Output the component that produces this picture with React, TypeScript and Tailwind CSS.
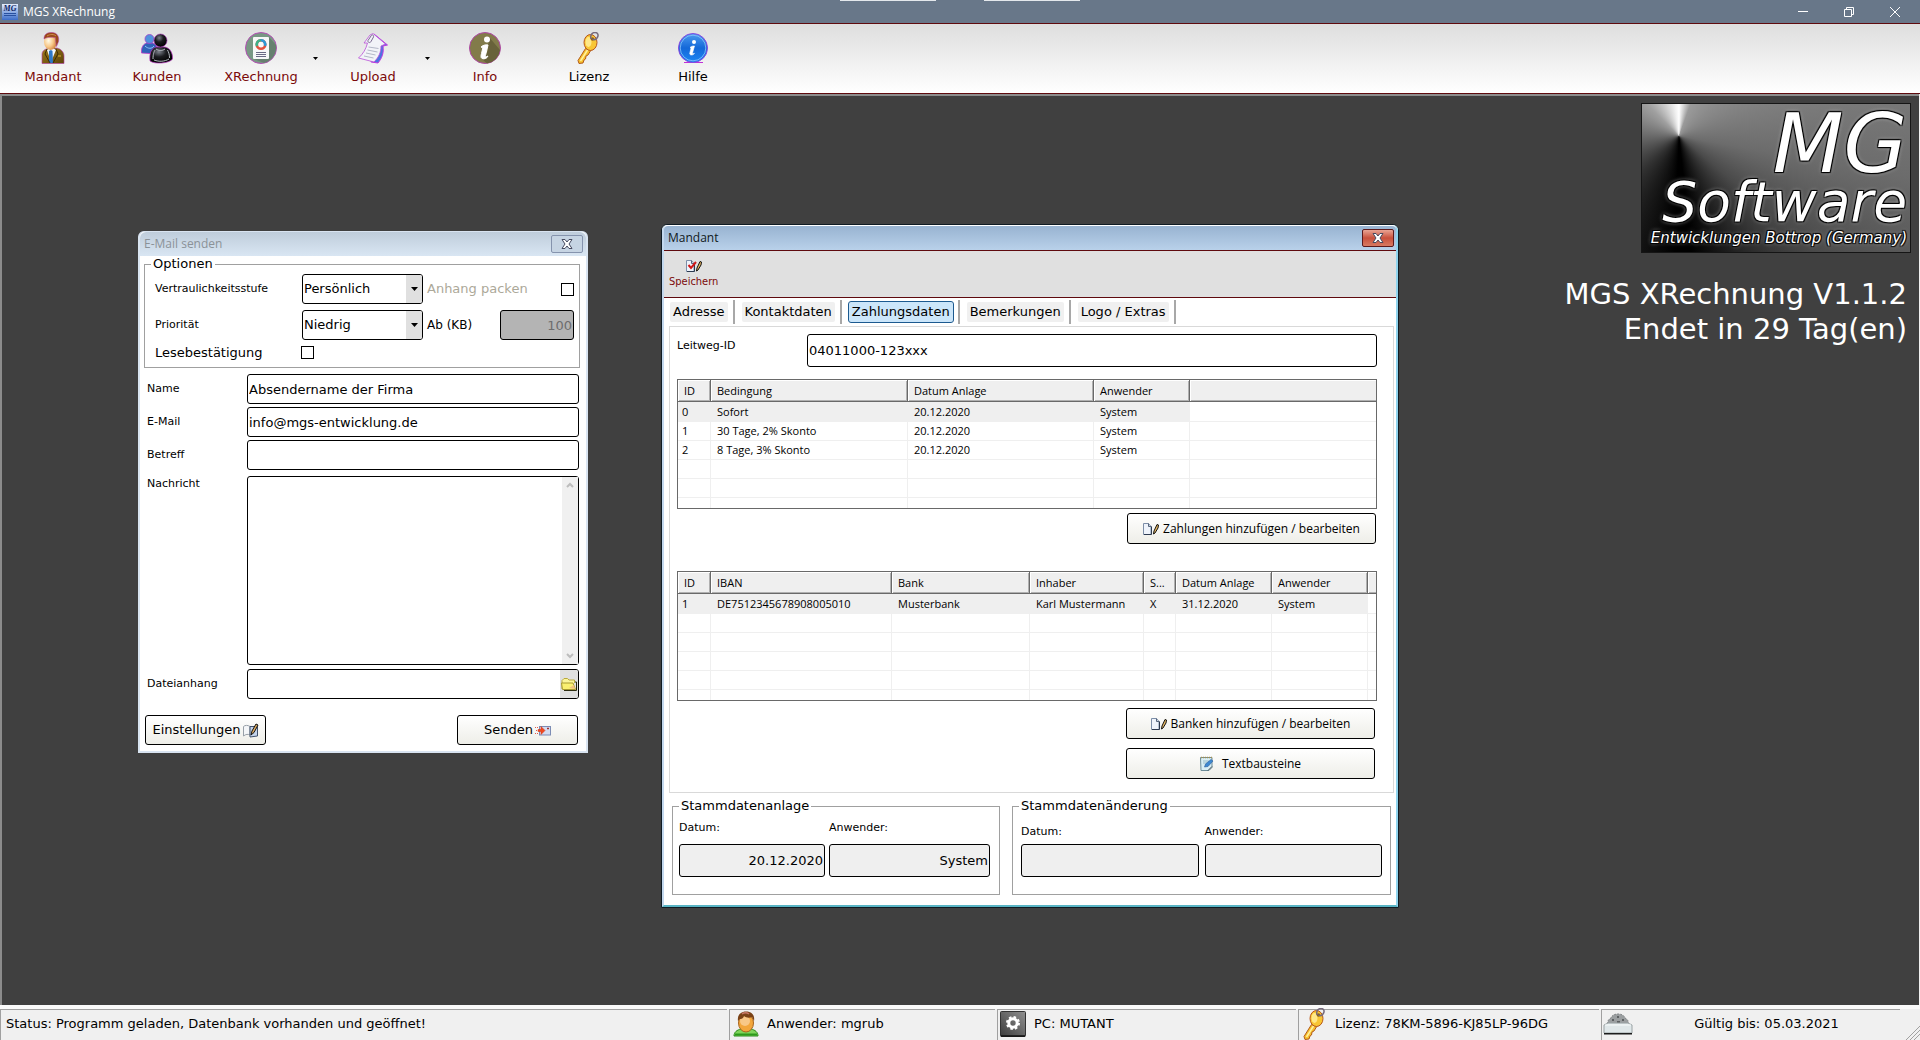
import type { ReactNode } from 'react';

type Column = { label: string; width: string };

const paymentColumns: Column[] = [
  { label: 'ID', width: 'w-[33px]' },
  { label: 'Bedingung', width: 'w-[197px]' },
  { label: 'Datum Anlage', width: 'w-[186px]' },
  { label: 'Anwender', width: 'w-24' },
];

const payments = [
  ['0', 'Sofort', '20.12.2020', 'System'],
  ['1', '30 Tage, 2% Skonto', '20.12.2020', 'System'],
  ['2', '8 Tage, 3% Skonto', '20.12.2020', 'System'],
];

const bankColumns: Column[] = [
  { label: 'ID', width: 'w-[33px]' },
  { label: 'IBAN', width: 'w-[181px]' },
  { label: 'Bank', width: 'w-[138px]' },
  { label: 'Inhaber', width: 'w-[114px]' },
  { label: 'S...', width: 'w-8' },
  { label: 'Datum Anlage', width: 'w-24' },
  { label: 'Anwender', width: 'w-24' },
];

const banks = [['1', 'DE7512345678908005010', 'Musterbank', 'Karl Mustermann', 'X', '31.12.2020', 'System']];

const tabs = ['Adresse', 'Kontaktdaten', 'Zahlungsdaten', 'Bemerkungen', 'Logo / Extras'];

const FIELD = 'rounded-[3px] border border-black bg-white px-px text-[13px] text-black outline-none';
const BUTTON =
  'flex items-center justify-center rounded-[3px] border border-black bg-gradient-to-b from-white to-[#eeeee8] text-black';
const UI_FONT = "font-['Open_Sans','Noto_Sans',sans-serif]";

/* ---------- icons ---------- */

function ManIcon() {
  return (
    <svg viewBox="0 0 32 32" className="h-8 w-8">
      <defs>
        <radialGradient id="manFace" cx="0.35" cy="0.45" r="0.7">
          <stop offset="0" stopColor="#fffbe8" />
          <stop offset="0.5" stopColor="#f8c98a" />
          <stop offset="1" stopColor="#c8742c" />
        </radialGradient>
        <linearGradient id="manCoat" x1="0" y1="0" x2="1" y2="1">
          <stop offset="0" stopColor="#a07a1c" />
          <stop offset="1" stopColor="#5c4308" />
        </linearGradient>
      </defs>
      <path d="M5 31.500V22c0-3 3-5 7-6h8c4 1 7 4 7 8v7.500z" fill="url(#manCoat)" stroke="#b23aa8" strokeWidth="0.6" />
      <path d="M10 18l4 12 5-12-3-2h-4z" fill="#f2f6fb" />
      <path d="M12 19l2-1 1.500 1 .5 12h-4z" fill="#2e78c8" />
      <path d="M10 17l-2 5 5 9M19 17l2 5-5 9" stroke="#3c2c04" fill="none" />
      <path d="M21 24h3" stroke="#d8b030" />
      <ellipse cx="13.500" cy="9.500" rx="6.500" ry="8.500" fill="url(#manFace)" />
      <path d="M7 7C7 2 10 .5 15 .5c5 0 7.500 4 6.500 9l-2 5c-.5-3-1-6-1-9-4 0-7-1-11.500 1.500z" fill="#9a4a18" stroke="#b23aa8" strokeWidth="0.5" />
      <path d="M10 4c3-2 7-2 9 0" stroke="#d08a50" fill="none" />
    </svg>
  );
}

function CustomersIcon() {
  return (
    <svg viewBox="0 0 32 32" className="h-8 w-8">
      <defs>
        <radialGradient id="custHead" cx="0.4" cy="0.3" r="0.7">
          <stop offset="0" stopColor="#7d828c" />
          <stop offset="0.45" stopColor="#1b1c20" />
          <stop offset="1" stopColor="#000" />
        </radialGradient>
      </defs>
      <path d="M.5 21c-.5-6 2-9 5-10h6c4 1 5 4 5 11z" fill="#2f62b8" stroke="#c03ac8" strokeWidth="0.8" />
      <circle cx="8.500" cy="7" r="4.500" fill="#4f92dc" stroke="#a040c8" strokeWidth="0.8" />
      <path d="M4 14c3 3 7 3 9 0" stroke="#8cc0f4" fill="none" />
      <path d="M9 29c-1-9 2-13 6-14h9c5 1 8 6 7.500 12-3 4.500-18 5.500-22.500 2z" fill="url(#custHead)" stroke="#c03ac8" strokeWidth="0.7" />
      <circle cx="19.500" cy="8.500" r="6.500" fill="url(#custHead)" stroke="#a030b0" strokeWidth="0.6" />
      <path d="M12 27c0-5 1-7 2-9M28.500 26c0-4-1-6-2-8M13 28c5 2 11 1.500 15-1M15 17c3 2 6 2 9 0" stroke="#b8bcc4" fill="none" />
    </svg>
  );
}

function ReportIcon() {
  return (
    <svg viewBox="0 0 32 32" className="h-8 w-8">
      <circle cx="16" cy="16" r="15.500" fill="#789884" stroke="#b54fb5" />
      <path d="M24 5l7 8a16 16 0 0 1-12 18L9 27z" fill="#66806f" />
      <rect x="8" y="5" width="16" height="22" rx="1" fill="#f7f8f8" />
      <circle cx="16" cy="12.500" r="4.200" fill="none" stroke="#e2503c" strokeWidth="2.600" />
      <path d="M16 8.300a4.200 4.200 0 0 1 4 5.500" fill="none" stroke="#2a9ad8" strokeWidth="2.600" />
      <path d="M12 14a4.200 4.200 0 0 1 4-5.700" fill="none" stroke="#3db28a" strokeWidth="2.600" />
      <path d="M11 20.500h10M11 22.500h10M11 24.500h10" stroke="#6a6a84" />
    </svg>
  );
}

function UploadIcon() {
  return (
    <svg viewBox="0 0 32 32" className="h-8 w-8">
      <path d="M17 2l13.500 11-4.500 1c1 7-1 12-5 17l-7-1z" fill="#4b74e0" stroke="#c03ae0" />
      <path d="M7 11l6-8 3-1.500L28.500 12 24 14c0 6-2 11-7 16L1.500 26C6 22 9 17 10.500 11z" fill="#f2f3f8" stroke="#b94fd8" strokeWidth="0.800" />
      <path d="M11.500 15l10 1.500M10.500 18l10 2M9 21l9.500 2M7 24l9.500 2" stroke="#b4b8c8" />
      <path d="M14 4l-3 4.500c-.5 2 2 3 3 1L16.500 5c.5-2-1.500-3-2.500-1z" fill="none" stroke="#7a6a90" />
    </svg>
  );
}

function InfoIcon() {
  return (
    <svg viewBox="0 0 32 32" className="h-8 w-8">
      <circle cx="16" cy="16" r="15.500" fill="#827b4a" stroke="#b048a8" />
      <path d="M20 5l11 13a15.500 15.500 0 0 1-13 13.500L13 27l6-8z" fill="#68623a" />
      <circle cx="18" cy="7.500" r="3" fill="#fff" />
      <path d="M12 15c2-2 5-2.500 7-2l-2.500 10.500c-.3 1.500.5 1.500 2.500.5-1 2.500-4 3.500-6 2.500-1.500-.8-1-3-.5-5l1.300-5.500z" fill="#fff" stroke="#fff" />
    </svg>
  );
}

function KeyIcon() {
  return (
    <svg viewBox="0 0 32 32" className="h-8 w-8">
      <path d="M12.500 16.500L5 28.500l1 3 4-.5 1-3 1.500-1 .5-3 2-1 3-5z" fill="#f6c02c" stroke="#b35a18" />
      <path d="M14.500 18L7.500 29" stroke="#fff0a0" strokeWidth="1.500" />
      <ellipse cx="17.500" cy="10.500" rx="6.500" ry="8" fill="#f8c634" stroke="#b8581c" />
      <ellipse cx="15.500" cy="10" rx="3" ry="5" fill="#ffe888" />
      <circle cx="19.500" cy="7" r="1.800" fill="#8a6020" />
      <path d="M18 7c-1-4 1-6.500 4-6.500s4 3 2 5.500c-1 1.500-3 2-4.500 1" fill="none" stroke="#766a7c" strokeWidth="1.500" />
    </svg>
  );
}

function HelpIcon() {
  return (
    <svg viewBox="0 0 32 32" className="h-8 w-8">
      <defs>
        <linearGradient id="helpBlue" x1="0" y1="0" x2="0" y2="1">
          <stop offset="0" stopColor="#4d9cf0" />
          <stop offset="0.5" stopColor="#1468d8" />
          <stop offset="1" stopColor="#1c86f4" />
        </linearGradient>
      </defs>
      <path d="M7 30.500h19" stroke="#c030d8" />
      <circle cx="16" cy="16" r="14.500" fill="url(#helpBlue)" stroke="#8848e0" />
      <circle cx="16" cy="16" r="12.800" fill="none" stroke="#8cc4fa" strokeWidth="0.800" />
      <circle cx="17" cy="10" r="2" fill="#fff" />
      <path d="M13 15.500c1.500-1.500 3-1.500 4.500-1.500L15.500 21c-.3 1 .5 1 2 .3-1 1.500-2.500 2-4 1.500-1-.5-.8-1.500-.5-2.500l1-4z" fill="#fff" stroke="#fff" strokeWidth="0.600" />
    </svg>
  );
}

function UserIcon() {
  return (
    <svg viewBox="0 0 26 26" className="h-[26px] w-[26px]">
      <path d="M1 25c0-4 3-6 7-7h10c4 1 7 3 7 7z" fill="#7ed45a" stroke="#2c8a1c" />
      <path d="M2 23.500h22" stroke="#2c9a1c" strokeWidth="2" />
      <ellipse cx="13" cy="12" rx="7.500" ry="9" fill="#f2a63c" stroke="#a8641c" />
      <ellipse cx="12" cy="10" rx="5" ry="5" fill="#f8c888" />
      <path d="M5 10c-1-6 3-9.500 8-9.500 6 0 9 4 8 9.500l-2-4c-2 1-6 1-8-1-1 3-3 3-4 3z" fill="#7a4216" />
      <path d="M9 3c2-1.500 5-1.500 7 0" stroke="#c87868" strokeWidth="1.500" fill="none" />
    </svg>
  );
}

function ComputerIcon() {
  return (
    <svg viewBox="0 0 26 26" className="h-[26px] w-[26px]">
      <defs>
        <linearGradient id="pcGrey" x1="1" y1="0" x2="0" y2="1">
          <stop offset="0" stopColor="#909090" />
          <stop offset="1" stopColor="#3c3c3c" />
        </linearGradient>
      </defs>
      <rect x="0.500" y="0.500" width="25" height="25" rx="1" fill="url(#pcGrey)" stroke="#333" />
      <circle cx="13" cy="12" r="5.500" fill="none" stroke="#fff" strokeWidth="3" strokeDasharray="2.300 2" />
      <circle cx="13" cy="12" r="4.200" fill="none" stroke="#fff" strokeWidth="3" />
      <path d="M1 25h24" stroke="#111" strokeWidth="1.500" />
    </svg>
  );
}

function DriveIcon() {
  return (
    <svg viewBox="0 0 30 22" className="h-[22px] w-[30px]">
      <path d="M5 11C4 8 6 6 8 5c1-3 4-4 7-4s6 1 7 4c2 1 4 3 3 6z" fill="#9a9ea0" stroke="#808486" strokeDasharray="2 1" />
      <path d="M9 6h2v2H9zM14 3h2v2h-2zM19 6h2v2h-2zM14 8h3v2h-3z" fill="#5c6062" />
      <path d="M1 12l4-2h20l4 2v8H1z" fill="#dfe7e9" stroke="#9aa2a4" />
      <path d="M2 12h26" stroke="#f8fcfc" />
      <path d="M1 20h28v1.500H1z" fill="#1c1c1c" />
    </svg>
  );
}

function PageIcon({ check }: { check?: boolean }) {
  return (
    <svg viewBox="0 0 16 12" className="h-3 w-4 shrink-0">
      <path d="M.5.500h5l2.500 3v8H.5z" fill="#eef3fb" stroke="#7d8ea8" />
      <path d="M5.500.500v3H8" fill="none" stroke="#56657c" />
      <path d="M1 11.500h7.500v-8" fill="none" stroke="#2c3a50" />
      {check && <path d="M2.500 5l2.500 3 5-6" fill="none" stroke="#d01818" strokeWidth="2" />}
      <path d="M10.500 11l.5-3 3-6.500 1.500.5-.5 3-3 5z" fill="#e8b860" stroke="#111" />
    </svg>
  );
}

function NotebookIcon() {
  return (
    <svg viewBox="0 0 16 15" className="h-[15px] w-4">
      <path d="M.5 13V3.500C2 2 5 2 7 3.500V12C5 11 3 11 .5 13z" fill="#f4f6f8" stroke="#98a0a8" />
      <path d="M7 3.500h7.500v9.500L7 14z" fill="#c4d4ec" stroke="#40506a" />
      <path d="M8 12l1-4 4-7 2 1-4 7.500z" fill="#d8a860" stroke="#111" />
    </svg>
  );
}

function SendIcon() {
  return (
    <svg viewBox="0 0 16 11" className="h-[11px] w-4">
      <rect x="4.500" y="1.500" width="11" height="8.500" fill="#d4dcf0" stroke="#7c8cb4" />
      <path d="M12 3.500h2" stroke="#a03030" strokeWidth="1.500" />
      <path d="M0 2.500h3M0 8.500h3M1 5.500h3" stroke="#e05a4a" strokeDasharray="1 1" />
      <path d="M3 4.500h3V1.500l4 4-4 4V6.500H3z" fill="#f04a20" stroke="#d03010" strokeWidth="0.500" />
    </svg>
  );
}

function FolderIcon() {
  return (
    <svg viewBox="0 0 16 13" className="h-[13px] w-4">
      <path d="M14 4h1.500v8.500H3" fill="none" stroke="#2c2c10" />
      <path d="M1 11V2.500L3 .500h3.500L8 2h5.500v3" fill="#fbf59a" stroke="#b8a83c" />
      <path d="M1.500 11.500L.5 5H12l2.500 6.500z" fill="#faf070" stroke="#a89a30" />
      <path d="M8 10l5-3 1 4z" fill="#f2c080" />
    </svg>
  );
}

function NoteIcon() {
  return (
    <svg viewBox="0 0 14 15" className="h-[15px] w-[14px]">
      <path d="M.5 1.500h11.500v10l-3 3H1z" fill="#d8eef4" stroke="#6c8c98" />
      <path d="M1 1.500h11" stroke="#a8904c" strokeWidth="1.500" strokeDasharray="1 1" />
      <path d="M3 5h6M3 7h4" stroke="#98bcc8" />
      <path d="M4.500 11l1-3L11 3.500l2 1.500-5 5.500z" fill="#3c88d0" stroke="#2a5c9c" strokeWidth="0.600" />
      <path d="M8 14.500l4-4" stroke="#404c50" />
    </svg>
  );
}

function CloseGlyph() {
  return (
    <svg viewBox="0 0 12 10" className="h-2.5 w-3">
      <path d="M1 .500h3L6 3 8 .500h3L8 5l3 4.500H8L6 7 4 9.500H1L4 5z" fill="#fff" stroke="#474b60" />
    </svg>
  );
}

function DownArrow() {
  return (
    <svg viewBox="0 0 7 4" className="h-1 w-[7px]">
      <path d="M0 0h7L3.500 4z" fill="#000" />
    </svg>
  );
}

/* ---------- shared parts ---------- */

function ToolButton({ icon, label, dark, menu }: { icon: ReactNode; label: string; dark?: boolean; menu?: boolean }) {
  return (
    <div className="flex">
      <button className={`flex w-[104px] flex-col items-center gap-1 pt-2 text-[13px] leading-[18px] ${dark ? 'text-black' : 'text-[#7b0a0a]'}`}>
        {icon}
        {label}
      </button>
      {menu && (
        <button aria-label={`${label} Menü`} className="flex w-2 items-center">
          <svg viewBox="0 0 5 3" className="h-[3px] w-[5px]">
            <path d="M0 0h5L2.500 3z" fill="#000" />
          </svg>
        </button>
      )}
    </div>
  );
}

function Combo({ id, value }: { id: string; value: string }) {
  return (
    <div className="relative">
      <select id={id} defaultValue={value} className={`${FIELD} h-[30px] w-[121px] appearance-none`}>
        <option>{value}</option>
      </select>
      <span className="pointer-events-none absolute inset-y-px right-px flex w-4 items-center justify-center rounded-r-[2px] bg-[#e0e0e0]">
        <DownArrow />
      </span>
    </div>
  );
}

function CheckBox({ id }: { id: string }) {
  return <input id={id} type="checkbox" className="h-[13px] w-[13px] appearance-none border border-black bg-white" />;
}

function DataTable({ columns, rows }: { columns: Column[]; rows: string[][] }) {
  const blank = Array.from({ length: 6 - rows.length }, () => columns.map(() => ''));
  return (
    <div className="h-[130px] overflow-hidden border border-[#696969] bg-white">
      <table className={`w-full table-fixed border-separate border-spacing-0 text-left text-[11px] leading-[18px] text-black ${UI_FONT}`}>
        <thead>
          <tr className="h-[22px]">
            {columns.map((c) => (
              <th
                key={c.label}
                className={`${c.width} overflow-hidden border-r border-b border-[#696969] bg-[#efefef] py-0 pr-0 pl-1.5 font-normal whitespace-nowrap shadow-[inset_1px_1px_0_#fff,inset_-1px_-1px_0_#b0b0b0]`}
              >
                {c.label}
              </th>
            ))}
            <th className="border-b border-[#696969] bg-[#efefef] p-0 shadow-[inset_1px_1px_0_#fff,inset_0_-1px_0_#b0b0b0]" />
          </tr>
        </thead>
        <tbody>
          {[...rows, ...blank].map((row, i) => (
            <tr key={i} className={i === 0 ? 'h-5' : 'h-[19px]'}>
              {row.map((cell, j) => (
                <td
                  key={j}
                  className={`border-r border-b border-[#efefef] py-0 pr-0 whitespace-nowrap ${j === 0 ? 'pl-1' : 'pl-1.5'} ${i === 0 ? 'bg-[#efefef]' : ''}`}
                >
                  {cell}
                </td>
              ))}
              <td className="border-b border-[#efefef] p-0" />
            </tr>
          ))}
        </tbody>
      </table>
    </div>
  );
}

function StatusCell({ icon, width, children }: { icon?: ReactNode; width: string; children: ReactNode }) {
  return (
    <div className={`flex items-center border-t border-l border-[#a0a0a0] pb-0.5 ${width}`}>
      {icon}
      {children}
    </div>
  );
}

/* ---------- windows ---------- */

function MailWindow() {
  return (
    <section className="absolute top-[135px] left-[138px] w-[450px] rounded-t-md border-2 border-t border-[#d9e4f1] bg-white">
      <header className="flex h-6 items-center justify-between rounded-t-md bg-gradient-to-b from-[#bfcddb] to-[#d9e6f3] pr-[3px] pl-1">
        <h2 className="font-['Open_Sans',sans-serif] text-xs text-[#8b9298]">E-Mail senden</h2>
        <button aria-label="Schließen" className="flex h-[18px] w-8 items-center justify-center rounded-[2px] border border-[#8593ad] bg-[#c6d4e3]">
          <CloseGlyph />
        </button>
      </header>

      <fieldset className="mr-1.5 ml-1 border border-[#a0a0a0] pr-[5px] pb-2 pl-2.5">
        <legend className="-ml-1 px-0.5 text-[13px] leading-4">Optionen</legend>
        <div className="flex flex-col gap-1.5 pt-0.5 text-[11px]">
          <div className="flex items-center">
            <label htmlFor="stufe" className="w-[147px]">Vertraulichkeitsstufe</label>
            <Combo id="stufe" value="Persönlich" />
            <label htmlFor="packen" className="ml-1 flex-1 text-[13px] text-[#aca899]">Anhang packen</label>
            <CheckBox id="packen" />
          </div>
          <div className="flex items-center">
            <label htmlFor="prio" className="w-[147px]">Priorität</label>
            <Combo id="prio" value="Niedrig" />
            <label htmlFor="kb" className="ml-1 flex-1 text-xs">Ab (KB)</label>
            <input id="kb" disabled defaultValue="100" className="h-[30px] w-[74px] rounded-[3px] border border-black bg-[#b4b4b4] px-px text-right text-[13px] text-[#6d6d6d]" />
          </div>
          <div className="flex h-[13px] items-center">
            <label htmlFor="lesen" className="w-[146px] text-[13px]">Lesebestätigung</label>
            <CheckBox id="lesen" />
          </div>
        </div>
      </fieldset>

      <div className="mt-1.5 flex flex-col gap-[3px] px-[7px] text-[11px]">
        <div className="flex items-center">
          <label htmlFor="name" className="w-[100px]">Name</label>
          <input id="name" defaultValue="Absendername der Firma" className={`${FIELD} h-[30px] min-w-0 flex-1`} />
        </div>
        <div className="flex items-center">
          <label htmlFor="mail" className="w-[100px]">E-Mail</label>
          <input id="mail" defaultValue="info@mgs-entwicklung.de" className={`${FIELD} h-[30px] min-w-0 flex-1`} />
        </div>
        <div className="flex items-center">
          <label htmlFor="betreff" className="w-[100px]">Betreff</label>
          <input id="betreff" className={`${FIELD} h-[30px] min-w-0 flex-1`} />
        </div>
        <div className="flex pt-[3px] pb-px">
          <label htmlFor="nachricht" className="w-[100px]">Nachricht</label>
          <div className="relative flex flex-1">
            <textarea id="nachricht" className={`${FIELD} h-[189px] flex-1 resize-none`} />
            <div className="absolute inset-y-px right-px flex w-4 flex-col items-center justify-between bg-[#f0f0f0] py-1">
              <svg viewBox="0 0 8 6" className="h-2 w-2">
                <path d="M1 5l3-3 3 3" fill="none" stroke="#bdbdbd" strokeWidth="2" />
              </svg>
              <svg viewBox="0 0 8 6" className="h-2 w-2">
                <path d="M1 1l3 3 3-3" fill="none" stroke="#bdbdbd" strokeWidth="2" />
              </svg>
            </div>
          </div>
        </div>
        <div className="flex items-center">
          <label htmlFor="datei" className="w-[100px]">Dateianhang</label>
          <div className="relative flex flex-1">
            <input id="datei" className={`${FIELD} h-[30px] flex-1`} />
            <button aria-label="Datei wählen" className="absolute inset-y-px right-px flex w-[18px] items-center justify-center rounded-r-[2px] bg-[#e0e0e0]">
              <FolderIcon />
            </button>
          </div>
        </div>
      </div>

      <footer className="mt-4 flex justify-between pr-2 pb-1.5 pl-[5px] text-[13px]">
        <button className={`${BUTTON} h-[30px] w-[121px] gap-0.5`}>
          Einstellungen <NotebookIcon />
        </button>
        <button className={`${BUTTON} h-[30px] w-[121px] gap-0.5`}>
          Senden <SendIcon />
        </button>
      </footer>
    </section>
  );
}

function MandantWindow() {
  return (
    <section className="absolute top-32 left-[661px] w-[738px] rounded-t-md border border-[#101c24] bg-white">
      <div className="rounded-t-md border-x-2 border-b-2 border-[#8fd4ee] border-l-[#c3d8ee] border-b-[#58b4c4]">
        <header className="flex h-[25px] items-center justify-between rounded-t-[4px] border-t border-white bg-gradient-to-b from-[#98b3d1] to-[#b9d1ea] pr-0.5 pl-1">
          <h2 className="font-['Open_Sans',sans-serif] text-xs text-[#101820]">Mandant</h2>
          <button aria-label="Schließen" className="flex h-[18px] w-8 items-center justify-center rounded-[2px] border border-[#5c1a1c] bg-gradient-to-b from-[#e8a494] via-[#c8503c] to-[#d87a62]">
            <CloseGlyph />
          </button>
        </header>

        <div className="flex h-12 border-y border-[#5f0a0e] bg-[#e0e0e0] pl-[5px]">
          <button className="flex flex-col items-center gap-0.5 pt-[9px] font-['DejaVu_Sans_Condensed','DejaVu_Sans',sans-serif] text-[11px] leading-4 text-[#7b0a0a]">
            <PageIcon check />
            Speichern
          </button>
        </div>

        <nav className="flex h-7 items-center pl-1.5">
          {tabs.map((tab) => (
            <div key={tab} className="flex items-center">
              <button
                className={`rounded-[2px] px-[3px] text-[13px] leading-5 text-black ${tab === 'Zahlungsdaten' ? 'bg-[#cce6fa] outline outline-[#1c5a90]' : 'bg-[#f0f0f0]'}`}
              >
                {tab}
              </button>
              <span className="mr-[7px] ml-[5px] h-6 w-0.5 bg-[#a8a8a8]" />
            </div>
          ))}
        </nav>

        <div className="mr-0.5 ml-[5px] border border-[#d9d9d9] pt-[7px] pr-4 pb-[13px] pl-[7px]">
          <div className="mb-3 flex">
            <label htmlFor="leitweg" className="w-[130px] pt-1 text-[11px]">Leitweg-ID</label>
            <input id="leitweg" defaultValue="04011000-123xxx" className={`${FIELD} h-[33px] min-w-0 flex-1`} />
          </div>
          <DataTable columns={paymentColumns} rows={payments} />
          <div className={`mt-1 mb-[27px] flex justify-end pr-px text-xs ${UI_FONT}`}>
            <button className={`${BUTTON} h-[31px] w-[249px] gap-1`}>
              <PageIcon /> Zahlungen hinzufügen / bearbeiten
            </button>
          </div>
          <DataTable columns={bankColumns} rows={banks} />
          <div className={`mt-[7px] flex flex-col items-end gap-[9px] pr-0.5 text-xs ${UI_FONT}`}>
            <button className={`${BUTTON} h-[31px] w-[249px] gap-1`}>
              <PageIcon /> Banken hinzufügen / bearbeiten
            </button>
            <button className={`${BUTTON} h-[31px] w-[249px] gap-2`}>
              <NoteIcon /> Textbausteine
            </button>
          </div>
        </div>

        <div className="mt-[5px] flex gap-3 pr-[5px] pb-2.5 pl-2 text-[11px]">
          <fieldset className="w-[328px] border border-[#a0a0a0] pb-[17px] pl-1.5">
            <legend className="px-0.5 text-[13px] leading-4">Stammdatenanlage</legend>
            <div className="flex gap-1 pt-1">
              <label className="flex w-[146px] flex-col gap-1.5 leading-5">
                Datum:
                <input readOnly value="20.12.2020" className="h-[33px] rounded-[3px] border border-black bg-[#efefef] px-px text-right text-[13px]" />
              </label>
              <label className="flex w-[161px] flex-col gap-1.5 leading-5">
                Anwender:
                <input readOnly value="System" className="h-[33px] rounded-[3px] border border-black bg-[#efefef] px-px text-right text-[13px]" />
              </label>
            </div>
          </fieldset>
          <fieldset className="flex-1 border border-[#a0a0a0] pr-2 pb-[17px] pl-2">
            <legend className="-ml-0.5 px-0.5 text-[13px] leading-4">Stammdatenänderung</legend>
            <div className="flex gap-1.5 pt-2">
              <label className="flex flex-1 flex-col gap-0.5 leading-5">
                Datum:
                <input readOnly value="" className="h-[33px] rounded-[3px] border border-black bg-[#efefef] px-px" />
              </label>
              <label className="flex flex-1 flex-col gap-0.5 leading-5">
                Anwender:
                <input readOnly value="" className="h-[33px] rounded-[3px] border border-black bg-[#efefef] px-px" />
              </label>
            </div>
          </fieldset>
        </div>
      </div>
    </section>
  );
}

function Brand() {
  return (
    <aside className="absolute top-[7px] right-[9px] flex flex-col items-end text-white">
      <div className="flex h-[150px] w-[270px] flex-col items-end border border-[#151515] bg-[conic-gradient(from_0deg_at_37px_32px,#fff_0deg,#9a9a9a_20deg,#858585_60deg,#6c6c6c_100deg,#4a4a4a_130deg,#202020_155deg,#000_174deg,#000_182deg,#303030_225deg,#6a6a6a_270deg,#a0a0a0_315deg,#f0f0f0_352deg,#fff_360deg)] pr-[3px] italic [text-shadow:1px_1px_1px_#000,-1px_-1px_1px_#000,1px_-1px_1px_#000,-1px_1px_1px_#000,0_0_4px_#ccc]">
        <div className="text-[82px] leading-[80px]">MG</div>
        <div className="text-[55px] leading-[36px]">Software</div>
        <div className="pt-1.5 text-[15px] leading-6">Entwicklungen Bottrop (Germany)</div>
      </div>
      <div className="mt-6 pr-1 text-right text-[29px] leading-[35px]">
        MGS XRechnung V1.1.2
        <br />
        Endet in 29 Tag(en)
      </div>
    </aside>
  );
}

export default function App() {
  return (
    <div className="flex min-h-screen flex-col bg-[#f0f0f0] font-['DejaVu_Sans',Verdana,sans-serif] text-black">
      {/* Title bar */}
      <header className="relative flex h-6 items-center border-b border-[#5f0a0e] bg-[#687789] pl-0.5 text-white">
        <div className="absolute top-0 left-[840px] flex gap-12">
          <span className="h-px w-24 bg-[#e4e8ec]" />
          <span className="h-px w-24 bg-[#e4e8ec]" />
        </div>
        <span className="flex h-4 w-4 flex-col items-center bg-gradient-to-b from-[#e4ecfa] to-[#3c6cc8] font-['Liberation_Serif',serif] text-[8px] leading-[9px] font-bold text-[#0c2060] italic">
          MG
          <span className="h-px w-3 bg-[#2850a0]" />
          <span className="mt-px h-px w-3 bg-[#2850a0]" />
        </span>
        <h1 className="ml-[5px] flex-1 font-['Open_Sans',sans-serif] text-xs">MGS XRechnung</h1>
        <div className="flex h-full pr-0.5">
          <button aria-label="Minimieren" className="flex w-[46px] items-center justify-center">
            <span className="h-px w-2.5 bg-white" />
          </button>
          <button aria-label="Wiederherstellen" className="flex w-[46px] items-center justify-center">
            <svg viewBox="0 0 10 10" className="h-2.5 w-2.5">
              <path d="M.5 2.500h7v7h-7zM2.500 2.500v-2h7v7h-2" fill="none" stroke="#fff" />
            </svg>
          </button>
          <button aria-label="Schließen" className="flex w-[46px] items-center justify-center">
            <svg viewBox="0 0 10 10" className="h-2.5 w-2.5">
              <path d="M0 0l10 10M10 0L0 10" stroke="#fff" />
            </svg>
          </button>
        </div>
      </header>

      {/* Toolbar */}
      <div className="flex h-[70px] border-b border-[#5f0a0e] bg-gradient-to-b from-[#dedede] to-white pl-px">
        <ToolButton icon={<ManIcon />} label="Mandant" />
        <ToolButton icon={<CustomersIcon />} label="Kunden" />
        <ToolButton icon={<ReportIcon />} label="XRechnung" menu />
        <ToolButton icon={<UploadIcon />} label="Upload" menu />
        <ToolButton icon={<InfoIcon />} label="Info" />
        <ToolButton icon={<KeyIcon />} label="Lizenz" dark />
        <ToolButton icon={<HelpIcon />} label="Hilfe" dark />
      </div>

      {/* Desktop */}
      <main className="mr-px flex-1 border-t-2 border-l-2 border-[#8c8c8c] bg-[#404040]" />
      <div className="absolute inset-x-0 top-24">
        <MailWindow />
        <MandantWindow />
        <Brand />
      </div>

      {/* Status bar */}
      <footer className="flex h-[35px] gap-0.5 border-t-4 border-[#fafafa] text-[13px]">
        <StatusCell width="flex-1 pl-[5px]">Status: Programm geladen, Datenbank vorhanden und geöffnet!</StatusCell>
        <StatusCell width="w-[266px] gap-2 pl-[3px]" icon={<UserIcon />}>Anwender: mgrub</StatusCell>
        <StatusCell width="w-[299px] gap-2 pl-0.5" icon={<ComputerIcon />}>PC: MUTANT</StatusCell>
        <StatusCell width="w-[301px] gap-1" icon={<KeyIcon />}>Lizenz: 78KM-5896-KJ85LP-96DG</StatusCell>
        <StatusCell width="w-[299px] pl-px" icon={<DriveIcon />}>
          <span className="flex-1 text-center">Gültig bis: 05.03.2021</span>
        </StatusCell>
        <div className="flex w-[18px] items-end">
          <svg viewBox="0 0 18 16" className="h-4 w-[18px]">
            <path d="M4 16L18 2M8 16L18 6M12 16l6-6" stroke="#a0a0a0" />
          </svg>
        </div>
      </footer>
    </div>
  );
}
